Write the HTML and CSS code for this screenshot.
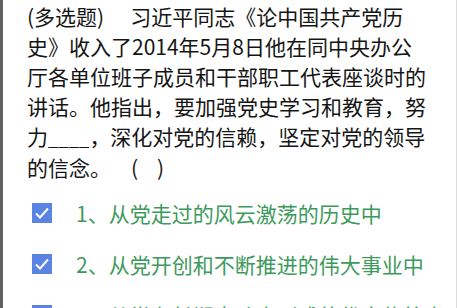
FILE: index.html
```html
<!DOCTYPE html>
<html lang="zh">
<head>
<meta charset="utf-8">
<link rel="stylesheet" href="styles.css">
</head>
<body>
<div class="page">
  <p class="question"><span class="type">(多选题)</span>习近平同志《论中国共产党历史》收入了2014年5月8日他在同中央办公厅各单位班子成员和干部职工代表座谈时的讲话。他指出，要加强党史学习和教育，努力<span class="fill">____</span>，深化对党的信赖，坚定对党的领导的信念。<span class="blank">(&nbsp;&nbsp;&nbsp;&nbsp;)</span></p>
  <ul class="options">
    <li class="option">
      <span class="box"><svg viewBox="0 0 20 20" width="20" height="20"><polyline points="4,10.5 8,14.5 16,5.5" fill="none" stroke="#fff" stroke-width="2"/></svg></span>
      <span class="label">1、从党走过的风云激荡的历史中</span>
    </li>
    <li class="option">
      <span class="box"><svg viewBox="0 0 20 20" width="20" height="20"><polyline points="4,10.5 8,14.5 16,5.5" fill="none" stroke="#fff" stroke-width="2"/></svg></span>
      <span class="label">2、从党开创和不断推进的伟大事业中</span>
    </li>
    <li class="option">
      <span class="box"><svg viewBox="0 0 20 20" width="20" height="20"><polyline points="4,10.5 8,14.5 16,5.5" fill="none" stroke="#fff" stroke-width="2"/></svg></span>
      <span class="label">3、从党在长期奋斗中形成的优良传统中</span>
    </li>
  </ul>
</div>
</body>
</html>
```
FILE: styles.css
```css
html, body {
  margin: 0;
  padding: 0;
  background: #fff;
  overflow: hidden;
}
.page {
  width: 457px;
  height: 308px;
  box-sizing: border-box;
  border-left: 3px solid #606060;
  border-right: 1px solid #dcdcdc;
  padding: 1px 28px 0 24px;
  font-family: "Noto Sans CJK SC", "Noto Sans", sans-serif;
  overflow: hidden;
}
.question {
  margin: 0;
  font-size: 21px;
  line-height: 30px;
  color: #151515;
}
.type {
  margin-right: 26px;
}
.fill {
  font-size: 18.5px;
}
.blank {
  margin-left: 20px;
}
.options {
  list-style: none;
  margin: 5px 0 0;
  padding: 0;
}
.option {
  display: flex;
  align-items: center;
  height: 51px;
  font-size: 21px;
  color: #3d9a5c;
  white-space: nowrap;
}
.box {
  display: flex;
  width: 20px;
  height: 20px;
  margin-left: 5px;
  margin-right: 24px;
  background: #5a84e4;
  flex: none;
}
.box svg {
  display: block;
}
```
